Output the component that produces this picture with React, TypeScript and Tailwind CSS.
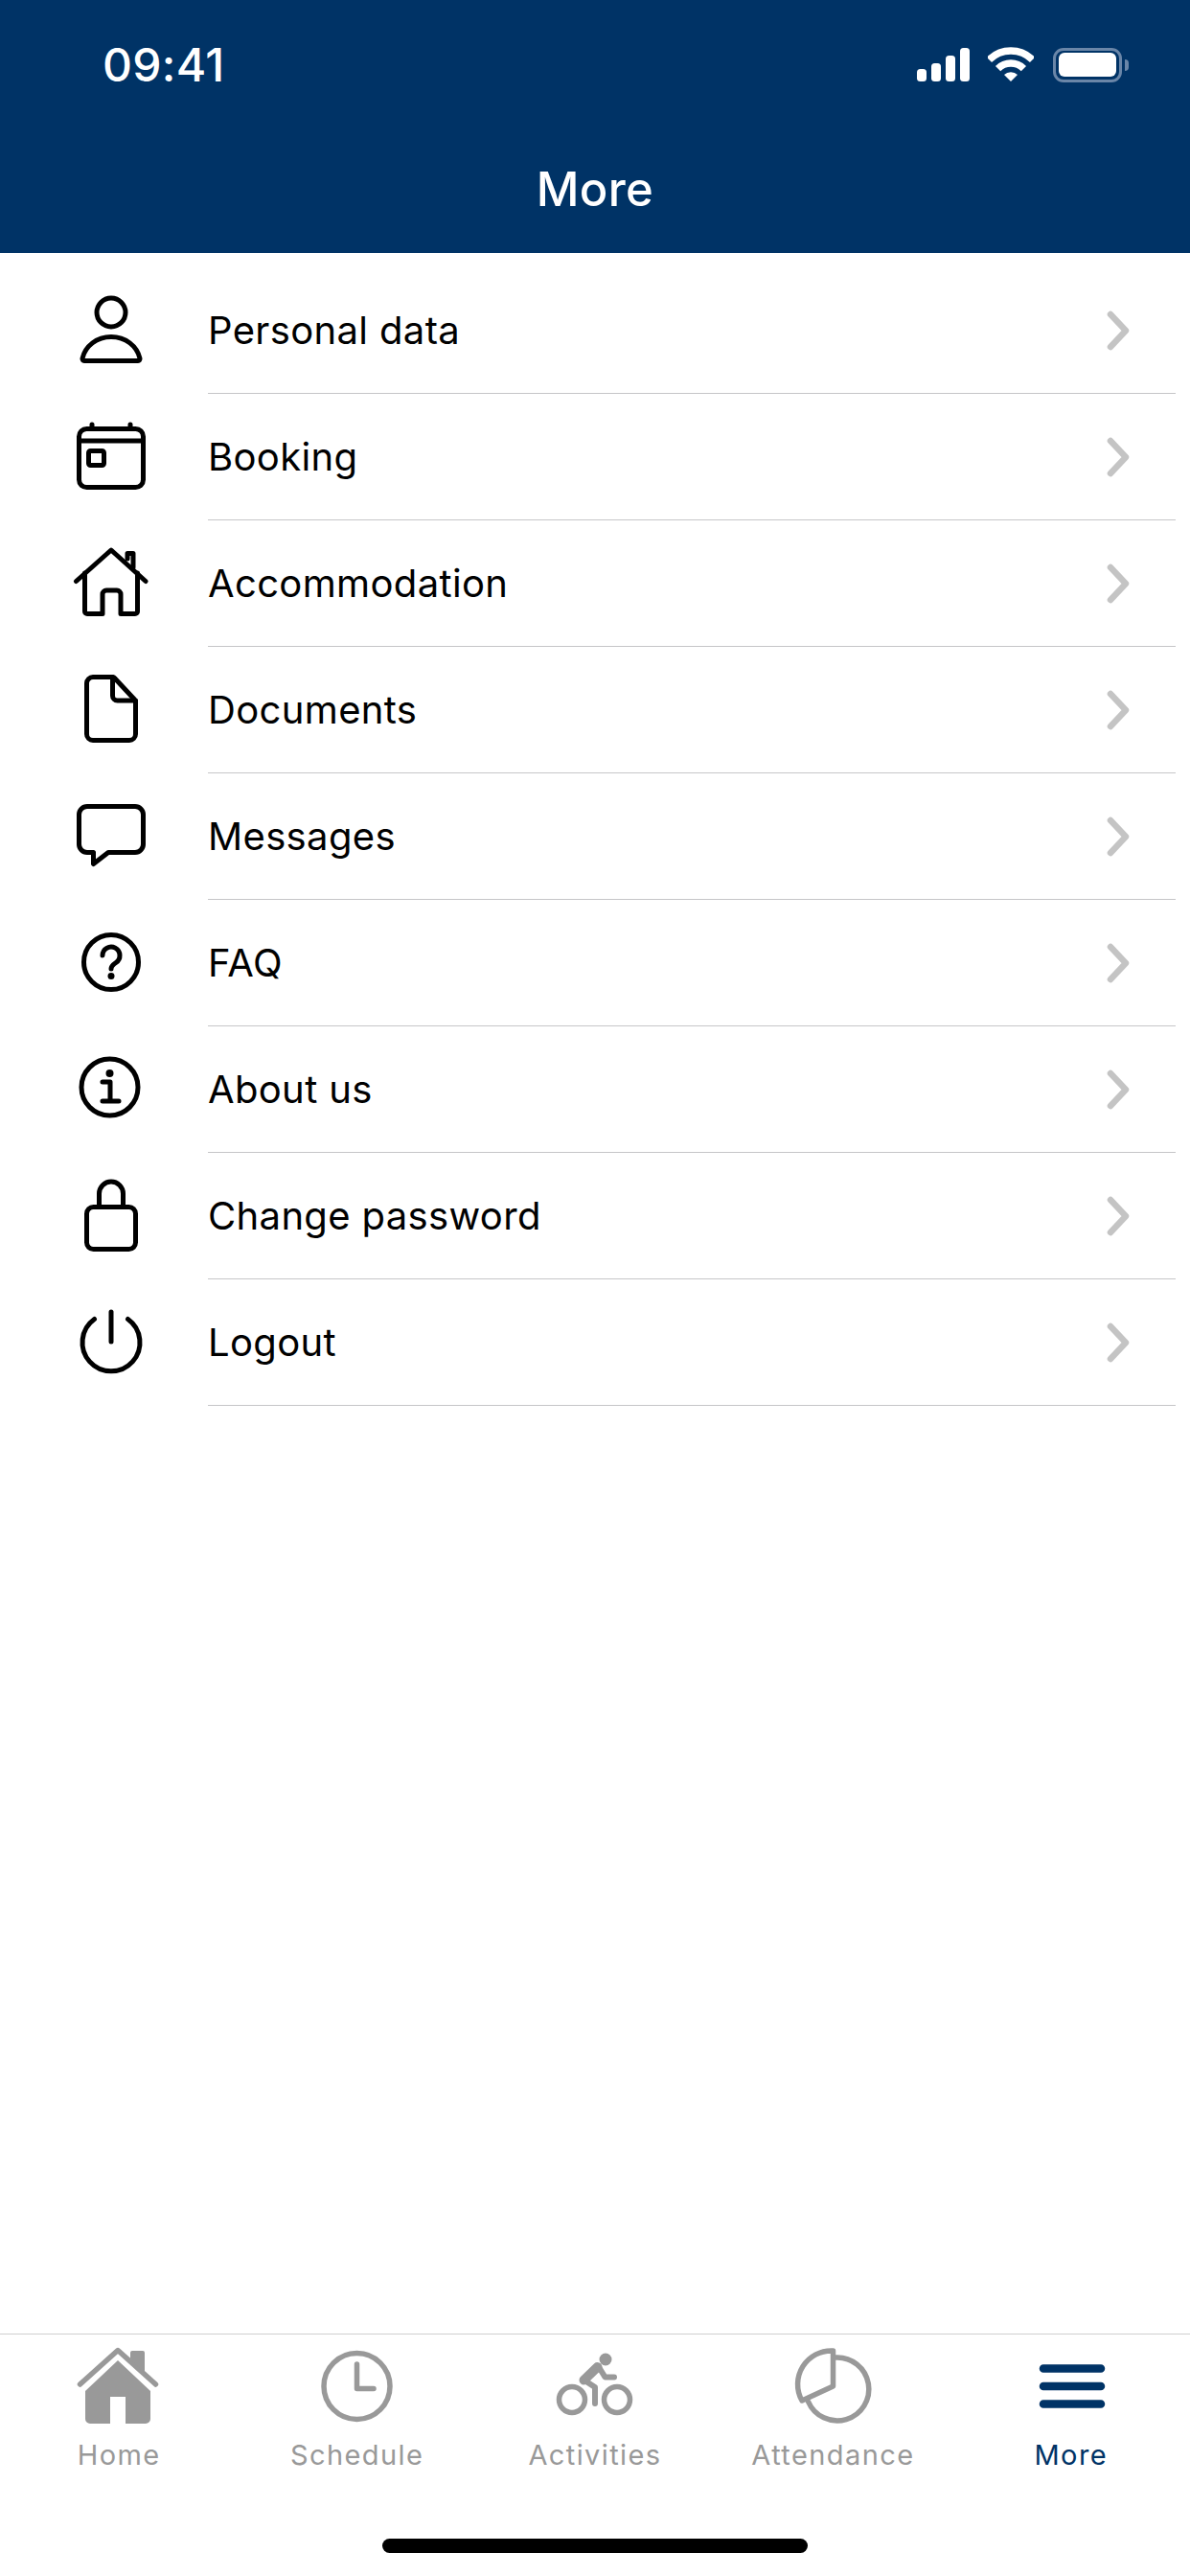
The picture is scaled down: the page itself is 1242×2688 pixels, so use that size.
import type { ReactNode } from 'react';

const Stroke = ({ children }: { children: ReactNode }) => (
  <svg
    viewBox="0 0 80 80"
    fill="none"
    stroke="#000"
    strokeWidth={5}
    strokeLinecap="round"
    strokeLinejoin="round"
    className="mb-[2px] h-[80px] w-[80px] shrink-0"
  >
    {children}
  </svg>
);

const menu: { label: string; icon: ReactNode }[] = [
  {
    label: 'Personal data',
    icon: (
      <>
        <circle cx="40" cy="22" r="15" />
        <path d="M12 72.5h56a2 2 0 0 0 2-2.5C67 57 55 47.5 40 47.5S13 57 10 70a2 2 0 0 0 2 2.5z" />
      </>
    ),
  },
  {
    label: 'Booking',
    icon: (
      <>
        <rect x="6.5" y="11.5" width="67" height="61" rx="8" />
        <path d="M6.5 24h67M20 7v4M60 7v4" />
        <rect x="16.5" y="34.5" width="16" height="15" rx="2" />
      </>
    ),
  },
  {
    label: 'Accommodation',
    icon: (
      <>
        <path d="M3.5 38.5L40 6l36 32.5" />
        <path d="M57 15V9.5h6V24" />
        <path d="M12.5 30v40a2.5 2.5 0 0 0 2.5 2.5h16V52a4 4 0 0 1 4-4h11a4 4 0 0 1 4 4v20.5h15a2.5 2.5 0 0 0 2.5-2.5V30" />
      </>
    ),
  },
  {
    label: 'Documents',
    icon: (
      <>
        <path d="M41.5 6.5H21A6.5 6.5 0 0 0 14.5 13v53a6.5 6.5 0 0 0 6.5 6.5h38a6.5 6.5 0 0 0 6.5-6.5V32.5a3 3 0 0 0-1-2.5L44 8a3.5 3.5 0 0 0-2.5-1.5z" />
        <path d="M41.5 6.5V26a5 5 0 0 0 5 5h19" />
      </>
    ),
  },
  {
    label: 'Messages',
    icon: <path d="M15 9.5h50a8.5 8.5 0 0 1 8.5 8.5v31a8.5 8.5 0 0 1-8.5 8.5H37L21.5 69.5v-12H15A8.5 8.5 0 0 1 6.5 49V18A8.5 8.5 0 0 1 15 9.5z" />,
  },
  {
    label: 'FAQ',
    icon: (
      <>
        <circle cx="40" cy="40" r="28.5" />
        <path d="M31 33a9 9 0 1 1 14 7.5c-3 2-5 3.5-5 6.5" />
        <circle cx="40" cy="54.5" r="3.5" fill="#000" stroke="none" />
      </>
    ),
  },
  {
    label: 'About us',
    icon: (
      <>
        <circle cx="38.5" cy="38.5" r="29.5" />
        <circle cx="38.5" cy="24" r="4" fill="#000" stroke="none" />
        <path d="M31 33h8v20M31 53h17" />
      </>
    ),
  },
  {
    label: 'Change password',
    icon: (
      <>
        <rect x="14.5" y="31.5" width="51" height="44" rx="7" />
        <path d="M27.5 31V17.5a12.5 12.5 0 0 1 25 0V31" />
      </>
    ),
  },
  {
    label: 'Logout',
    icon: (
      <>
        <path d="M22.5 16.5A30 30 0 1 0 57.5 16.5" />
        <path d="M40 9v31" />
      </>
    ),
  },
];

const grey = '#999999';

const tabs: { label: string; active?: boolean; icon: ReactNode }[] = [
  {
    label: 'Home',
    icon: (
      <>
        <path d="M9.5 43L49 7.5 88.5 43" fill="none" stroke={grey} strokeWidth={5.5} strokeLinecap="round" strokeLinejoin="round" />
        <path d="M62 16v-6a2 2 0 0 1 2-2h11a2 2 0 0 1 2 2v22z" fill={grey} />
        <path d="M49 18l34 32v29a5 5 0 0 1-5 5H57V56H41v28H20a5 5 0 0 1-5-5V50z" fill={grey} />
      </>
    ),
  },
  {
    label: 'Schedule',
    icon: (
      <g fill="none" stroke={grey} strokeWidth={5.5} strokeLinecap="round" strokeLinejoin="round">
        <circle cx="49.5" cy="45" r="34.5" />
        <path d="M49.5 22v25.5H67" />
      </g>
    ),
  },
  {
    label: 'Activities',
    icon: (
      <g fill="none" stroke={grey} strokeLinecap="round" strokeLinejoin="round">
        <circle cx="26" cy="59" r="13.5" strokeWidth={5.5} />
        <circle cx="73" cy="59" r="13.5" strokeWidth={5.5} />
        <circle cx="61" cy="17" r="6.5" fill={grey} stroke="none" />
        <path d="M52.5 25L38.5 38.5" strokeWidth={10} />
        <path d="M38.5 38.5l11.5 7.5v17" strokeWidth={6} />
        <path d="M54 25l6.5 10.5h9.500" strokeWidth={6} />
      </g>
    ),
  },
  {
    label: 'Attendance',
    icon: (
      <g fill="none" stroke={grey} strokeWidth={5.5} strokeLinecap="round" strokeLinejoin="round">
        <path d="M50.5 8A35 35 0 0 0 18 60l32.5-15z" />
        <path d="M53 15A33 33 0 1 1 24.5 61" />
      </g>
    ),
  },
  {
    label: 'More',
    active: true,
    icon: <path d="M21 26.5h60M21 45h60M21 63.5h60" fill="none" stroke="#003366" strokeWidth={8.5} strokeLinecap="round" />,
  },
];

function StatusIcons() {
  return (
    <div className="flex items-center">
      <svg viewBox="0 0 56 36" fill="#fff" className="h-[36px] w-[56px]">
        <rect x="0" y="22" width="10" height="13" rx="3.5" />
        <rect x="15" y="16" width="10" height="19" rx="3.5" />
        <rect x="30" y="8" width="10" height="27" rx="3.5" />
        <rect x="45" y="0" width="10" height="35" rx="3.5" />
      </svg>
      <svg viewBox="0 0 48 37" className="ml-[18px] h-[37px] w-[48px]">
        <g fill="none" stroke="#fff" strokeWidth={7.5}>
          <path d="M1.400 13.400A32 32 0 0 1 46.600 13.400" />
          <path d="M10.600 22.600A19 19 0 0 1 37.400 22.600" />
        </g>
        <path d="M24 36L17 29A10 10 0 0 1 31 29Z" fill="#fff" />
      </svg>
      <div className="ml-[20px] flex items-center">
        <div className="flex h-[36px] w-[72px] items-center justify-center rounded-[11px] border-[3px] border-[#6a86a8]">
          <div className="h-[25px] w-[60px] rounded-[6px] bg-white" />
        </div>
        <div className="ml-[3px] h-[12px] w-[4px] rounded-r-full bg-[#6a86a8]" />
      </div>
    </div>
  );
}

export default function App() {
  return (
    <div className="flex h-[2688px] w-[1242px] flex-col bg-white font-['Inter',sans-serif] text-black">
      <header className="h-[264px] bg-[#003366] text-white">
        <div className="flex items-center justify-between pl-[107px] pr-[64px] pt-[49px]">
          <span className="text-[48px] font-medium leading-[36px] tracking-[0.3px]">09:41</span>
          <StatusIcons />
        </div>
        <h1 className="mt-[82px] text-center text-[49px] font-medium leading-[60px] tracking-[0.3px]">More</h1>
      </header>

      <main className="flex-1 pt-[15px]">
        {menu.map((item) => (
          <div key={item.label} className="flex h-[132px] items-center pl-[76px]">
            <Stroke>{item.icon}</Stroke>
            <div className="ml-[61px] mr-[15px] flex h-full flex-1 items-center justify-between border-b border-[#c6c6c8] pr-[47px]">
              <span className="text-[40px] leading-[48px] tracking-[0.35px]">{item.label}</span>
              <svg viewBox="0 0 26 44" fill="none" stroke="#c4c4c4" strokeWidth={6.5} strokeLinecap="round" strokeLinejoin="round" className="h-[44px] w-[26px]">
                <path d="M5 5l16 17L5 39" />
              </svg>
            </div>
          </div>
        ))}
      </main>

      <footer className="border-t border-[#cfcfcf]">
        <nav className="grid grid-cols-5 pt-[9px]">
          {tabs.map((tab) => (
            <div key={tab.label} className="flex flex-col items-center">
              <svg viewBox="0 0 100 90" className="h-[90px] w-[100px]">
                {tab.icon}
              </svg>
              <span className={`mt-[9px] text-[29px] leading-[36px] tracking-[1.4px] ${tab.active ? 'text-[#003366]' : 'text-[#999999]'}`}>
                {tab.label}
              </span>
            </div>
          ))}
        </nav>
        <div className="flex justify-center pb-[24px] pt-[69px]">
          <div className="h-[15px] w-[444px] rounded-full bg-black" />
        </div>
      </footer>
    </div>
  );
}
